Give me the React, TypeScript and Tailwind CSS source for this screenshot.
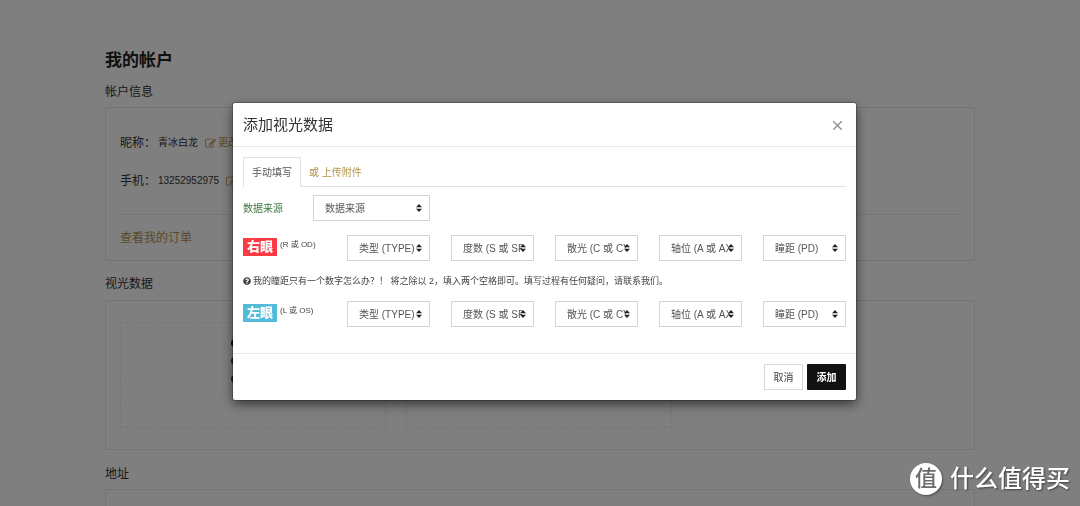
import { useState } from 'react';
import { X } from 'lucide-react';
import { FaQuestionCircle } from 'react-icons/fa';

interface Eye {
    id: string;
    label: string;
    note: string;
    badge: string;
}

const EYES: Eye[] = [
    { id: 'od', label: '右眼', note: '(R 或 OD)', badge: 'bg-[#fb3a44]' },
    { id: 'os', label: '左眼', note: '(L 或 OS)', badge: 'bg-[#52bbda]' },
];

const FIELDS = [
    { key: 'type', label: '类型 (TYPE)' },
    { key: 'sph', label: '度数 (S 或 SPH)' },
    { key: 'cyl', label: '散光 (C 或 CYL)' },
    { key: 'axis', label: '轴位 (A 或 AXIS)' },
    { key: 'pd', label: '瞳距 (PD)' },
];

const PROFILE = [
    { label: '昵称：', value: '青冰白龙', action: '更改' },
    { label: '手机：', value: '13252952975', action: '' },
];

function EditIcon() {
    return (
        <svg viewBox="0 0 1792 1792" className="size-[11px]" fill="currentColor" aria-hidden="true">
            <path d="M888 1184l116-116-152-152-116 116v56h96v96h56zm440-720q-16-16-33 1l-350 350q-17 17-1 33t33-1l350-350q17-17 1-33zm80 594v190q0 119-84.5 203.5t-203.5 84.5h-832q-119 0-203.5-84.5t-84.5-203.5v-832q0-119 84.5-203.5t203.5-84.5h832q63 0 117 25 15 7 18 23 3 17-9 29l-49 49q-14 14-32 8-23-6-45-6h-832q-66 0-113 47t-47 113v832q0 66 47 113t113 47h832q66 0 113-47t47-113v-126q0-13 9-22l64-64q15-15 35-7t20 29zm-96-738l288 288-672 672h-288v-288zm444 132l-92 92-288-288 92-92q28-28 68-28t68 28l152 152q28 28 28 68t-28 68z" />
        </svg>
    );
}

function SelectBox({ id, label }: { id: string; label: string }) {
    return (
        <div className="relative">
            <select
                id={id}
                aria-label={label}
                className="block h-[26px] w-full appearance-none border border-[#d4d4d4] bg-white pr-[11px] pl-[11px] text-[10px] text-[#555]"
            >
                <option>{label}</option>
            </select>
            <svg viewBox="0 0 6 8" className="pointer-events-none absolute top-[9px] right-[8px] h-2 w-[6px]" aria-hidden="true">
                <path d="M3 0 L6 3.2 H0 Z M0 4.8 H6 L3 8 Z" fill="#222" />
            </svg>
        </div>
    );
}

function EyeRow({ eye }: { eye: Eye }) {
    return (
        <div className="grid grid-cols-6 gap-[21px]">
            <div className="flex items-start gap-[3px] pt-[3px] whitespace-nowrap">
                <span className={`px-1 text-[13px] leading-[18px] font-black text-white ${eye.badge}`}>{eye.label}</span>
                <span className="text-[8px] leading-[14px] text-[#444]">{eye.note}</span>
            </div>
            {FIELDS.map(field => (
                <SelectBox key={field.key} id={`${eye.id}-${field.key}`} label={field.label} />
            ))}
        </div>
    );
}

function AccountPage() {
    return (
        <main className="mx-auto max-w-[870px] pt-[49px] text-[12px] text-[#333]">
            <h1 className="text-[17px] leading-6 font-bold text-[#222]">我的帐户</h1>

            <h2 className="mt-[10px] mb-[6px] leading-[18px]">帐户信息</h2>
            <section className="border border-[#e8e8e8] px-[14px] pt-[26px] pb-[13px]">
                {PROFILE.map(row => (
                    <div key={row.label} className="mb-5 flex items-center leading-[18px]">
                        <span className="w-[38px]">{row.label}</span>
                        <span className="text-[10px]">{row.value}</span>
                        <a href="#edit" aria-label="更改" className="ml-[7px] flex items-center gap-[2px] text-[10px] text-[#b3924c]">
                            <EditIcon />
                            {row.action}
                        </a>
                    </div>
                ))}
                <div className="mt-6 border-t border-[#ececec] pt-[14px]">
                    <a href="#orders" className="block leading-[18px] text-[#b3924c]">查看我的订单</a>
                </div>
            </section>

            <h2 className="mt-[14px] mb-[7px] leading-[18px]">视光数据</h2>
            <section className="flex gap-5 border border-[#e8e8e8] px-[14px] py-[21px]">
                <div className="flex h-[106px] w-[266px] flex-col gap-[10px] border border-dashed border-[#ececec] pt-4 pl-[110px]">
                    <span className="size-2 rounded-full bg-[#111]" />
                    <span className="size-2 rounded-full bg-[#444]" />
                    <span className="size-2 rounded-full bg-[#444]" />
                </div>
                <div className="h-[106px] w-[266px] border border-dashed border-[#ececec]" />
            </section>

            <h2 className="mt-[15px] mb-[6px] leading-[18px]">地址</h2>
            <section className="h-40 border border-[#e8e8e8]" />
        </main>
    );
}

function VisionDialog() {
    const [tab, setTab] = useState<'manual' | 'upload'>('manual');

    return (
        <div
            role="dialog"
            aria-labelledby="dialog-title"
            className="w-full max-w-[623px] rounded-[2px] bg-white shadow-[0_4px_12px_rgba(0,0,0,0.6),0_0_0_1px_rgba(0,0,0,0.2)]"
        >
            <header className="flex h-11 items-center justify-between border-b border-[#e8e8e8] px-[10px] pt-[2px]">
                <h2 id="dialog-title" className="text-[15px] text-[#333]">添加视光数据</h2>
                <button type="button" aria-label="关闭" className="px-px text-[#8a8a8a]">
                    <X size={15} />
                </button>
            </header>

            <div className="px-[10px] pt-[10px] pb-[26px]">
                <div role="tablist" className="flex border-b border-[#e2e2e2] text-[10px]">
                    <button
                        type="button"
                        role="tab"
                        aria-selected={tab === 'manual'}
                        onClick={() => setTab('manual')}
                        className="-mb-px h-[30px] border border-b-0 border-[#e2e2e2] bg-white px-2 text-[#555]"
                    >
                        手动填写
                    </button>
                    <button
                        type="button"
                        role="tab"
                        aria-selected={tab === 'upload'}
                        onClick={() => setTab('upload')}
                        className="px-2 pt-[2px] text-[#b3924c]"
                    >
                        或 上传附件
                    </button>
                </div>

                <div className="mt-2 flex items-center">
                    <label htmlFor="source" className="w-[70px] text-[10px] text-[#3c763d]">数据来源</label>
                    <div className="w-[117px]">
                        <SelectBox id="source" label="数据来源" />
                    </div>
                </div>

                <div className="mt-[14px]">
                    <EyeRow eye={EYES[0]} />
                </div>
                <p className="my-3 flex items-center gap-[2px] text-[9px] leading-4 text-[#444]">
                    <FaQuestionCircle size={8} />
                    我的瞳距只有一个数字怎么办？！ 将之除以 2，填入两个空格即可。填写过程有任何疑问，请联系我们。
                </p>
                <EyeRow eye={EYES[1]} />
            </div>

            <footer className="flex justify-end gap-1 border-t border-[#e8e8e8] p-[10px] text-[10px]">
                <button type="button" className="h-[26px] w-[39px] border border-[#d8d8d8] bg-white text-[#444]">取消</button>
                <button type="button" className="h-[26px] w-[39px] rounded-[1px] bg-[#111] font-bold text-white">添加</button>
            </footer>
        </div>
    );
}

function Watermark() {
    return (
        <div className="fixed right-[10px] bottom-[11px] flex items-center gap-2 text-white">
            <span className="flex size-8 items-center justify-center rounded-full bg-white text-[22px] leading-none font-medium text-[#6b6b6b] shadow-[1px_1px_2px_rgba(0,0,0,0.4)]">
                值
            </span>
            <span className="text-[24px] leading-8 font-medium text-shadow-[1px_1px_2px_rgba(0,0,0,0.5)]">什么值得买</span>
        </div>
    );
}

export default function App() {
    return (
        <div className="h-screen overflow-hidden bg-white font-['Liberation_Sans','Noto_Sans_CJK_SC',sans-serif]" lang="zh-CN">
            <AccountPage />
            <div className="fixed inset-0 flex items-start justify-center bg-black/50 pt-[103px] pl-[9px]">
                <VisionDialog />
            </div>
            <Watermark />
        </div>
    );
}
